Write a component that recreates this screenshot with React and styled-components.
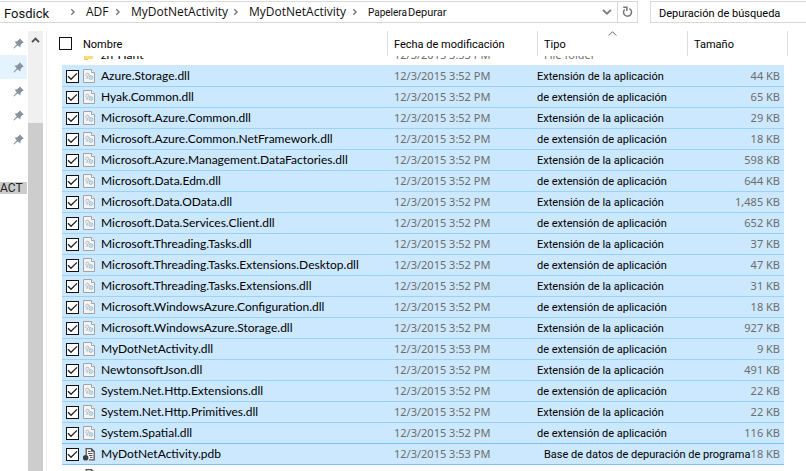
import React from "react";
import styled, { createGlobalStyle, css } from "styled-components";

const GlobalStyle = createGlobalStyle`
  *, *::before, *::after { box-sizing: border-box; }
  body {
    margin: 0;
    background: #fff;
    color: #000;
    font: 12px/20px "Open Sans", "Noto Sans", sans-serif;
  }
`;

const LATIN = `"Roboto", "Liberation Sans", sans-serif`;
const NAMES = `"Lato", "Open Sans", sans-serif`;
const FIGURES = `"Noto Sans", "Open Sans", sans-serif`;

const Explorer = styled.div`
  display: flex;
  flex-direction: column;
  height: 100vh;
  overflow: hidden;
`;

const TopBar = styled.header`
  display: flex;
  gap: 12px;
  height: 23px;
  margin-top: 1px;
  flex: none;
`;

const AddressBar = styled.nav`
  flex: 1;
  display: flex;
  min-width: 0;
  height: 22px;
  border: 1px solid #d9d9d9;
  border-left: 0;
`;

const Crumbs = styled.ol`
  flex: 1;
  display: flex;
  align-items: center;
  min-width: 0;
  margin: 0;
  padding: 0 0 0 4px;
  list-style: none;
  white-space: nowrap;
`;

const Crumb = styled.li`
  display: flex;
  align-items: center;
  flex: none;
  width: ${(p) => p.$width}px;
`;

const CrumbLink = styled.a`
  flex: 1;
  color: #111;
  text-decoration: none;
  line-height: 20px;
  ${(p) => p.$kind === "root" && css`font: 13px/20px ${LATIN}; padding-top: 4px;`}
  ${(p) => p.$kind === "small" && css`font: 10px/20px ${LATIN}; padding-top: 2px;`}
  ${(p) => p.$kind === "current" && css`font: 11px/20px ${LATIN}; padding-top: 2px;`}
`;

const ArrowSlot = styled.span`
  display: flex;
  width: 16px;
  flex: none;
`;

const BarButton = styled.button`
  display: flex;
  align-items: center;
  justify-content: center;
  width: 20px;
  padding: 0;
  border: 0;
  border-left: ${(p) => (p.$divided ? "1px solid #d9d9d9" : "0")};
  background: none;
`;

const Search = styled.input`
  width: 156px;
  height: 22px;
  padding: 2px 8px 0;
  border: 1px solid #d9d9d9;
  border-right: 0;
  border-radius: 0;
  color: #000;
  font: 11px/18px ${LATIN};
  &::placeholder { color: #000; opacity: 1; }
`;

const Body = styled.div`
  flex: 1;
  display: flex;
  min-height: 0;
  margin-top: 7px;
`;

const Sidebar = styled.aside`
  width: 27px;
  margin-right: 1px;
`;

const PinRow = styled.div`
  display: flex;
  align-items: center;
  justify-content: flex-end;
  height: 24px;
  padding-right: 3px;
  background: ${(p) => (p.$hover ? "#e5f3ff" : "transparent")};
`;

const FolderTag = styled.div`
  height: 12px;
  margin-top: 31px;
  background: #ccc;
  font: 12px/12px ${LATIN};
  color: #222;
`;

const ScrollBar = styled.div`
  display: flex;
  flex-direction: column;
  width: 15px;
  background: #f0f0f0;
`;

const ScrollUp = styled.button`
  display: flex;
  justify-content: center;
  height: 92px;
  padding: 6px 0 0;
  border: 0;
  background: none;
`;

const Thumb = styled.div`
  flex: 1;
  background: #cdcdcd;
`;

const Pane = styled.main`
  flex: 1;
  min-width: 0;
  margin-left: 3px;
  border-left: 1px solid #f0f0f0;
`;

const Files = styled.table`
  width: 100%;
  table-layout: fixed;
  border-spacing: 0;
  white-space: nowrap;
`;

const Col = styled.col`
  width: ${(p) => (p.$width ? `${p.$width}px` : "auto")};
`;

const HeadCell = styled.th`
  position: relative;
  height: 25px;
  padding: ${(p) => p.$pad || "3px 0 0 7px"};
  text-align: left;
  font: 11px/22px ${LATIN};
  vertical-align: top;
`;

const Ruled = styled(HeadCell)`
  background: linear-gradient(#dedede, #dedede) ${(p) => p.$rule || 0}px 0 / 1px 100% no-repeat;
`;

const SortMark = styled.svg`
  position: absolute;
  top: 0;
  left: 71px;
`;

const Cell = styled.td`
  height: 21px;
  padding: 0;
  line-height: 20px;
`;

const FileRow = styled.tr`
  ${Cell}:not(:first-child):not(:last-child) {
    background: #cce8ff;
    border-bottom: 1px solid ${(p) => (p.$strong ? "#7abfff" : "#99d1ff")};
  }
  &:nth-child(2) ${Cell}:not(:first-child):not(:last-child) {
    border-top: 1px solid #cce8ff;
  }
`;

const CheckCell = styled(Cell)`
  padding-left: 4px;
`;

const Check = styled.input`
  appearance: none;
  display: block;
  width: 13px;
  height: 13px;
  margin: 0;
  border: 1px solid #111;
  border-radius: 0;
  background: #fff;
  &:checked {
    background: #fff
      url("data:image/svg+xml,%3Csvg xmlns='http://www.w3.org/2000/svg' viewBox='0 0 11 11'%3E%3Cpath d='M1 5.3l3 3L10 2.4' fill='none' stroke='%23222' stroke-width='1.3'/%3E%3C/svg%3E")
      center / 11px 11px;
  }
`;

const NameCell = styled(Cell)`
  font: 12px/20px ${NAMES};
  & > label, & > span {
    display: flex;
    align-items: center;
    height: 20px;
    gap: 5px;
  }
`;

const DateCell = styled(Cell)`
  padding-left: 7px;
  color: #6d6d6d;
  font: 11px/20px ${FIGURES};
`;

const TypeCell = styled(Cell)`
  padding: 2px 0 0 ${(p) => (p.$indent ? 7 : 0)}px;
  font: 11px/18px ${LATIN};
`;

const SizeCell = styled(DateCell)`
  padding: 0 4px 0 0;
  text-align: right;
`;

const SliverCell = styled.td`
  height: 9px;
  padding: 0;
`;

const Sliver = styled.div`
  display: flex;
  align-items: flex-end;
  gap: 5px;
  height: 9px;
  padding-left: ${(p) => (p.$dim ? 7 : 0)}px;
  overflow: hidden;
  font: ${(p) => (p.$dim ? `11px/20px ${FIGURES}` : `12px/20px ${NAMES}`)};
  color: ${(p) => (p.$dim ? "#6d6d6d" : "#000")};
  & > svg { align-self: flex-start; }
`;

const CrumbArrow = () => (
  <svg width="6" height="8" viewBox="0 0 6 8" aria-hidden="true">
    <path d="M1.3 1.3l2.7 2.7-2.7 2.7" fill="none" stroke="#777" strokeWidth="1.4" />
  </svg>
);

const DownArrow = () => (
  <svg width="10" height="8" viewBox="0 0 10 8" aria-hidden="true">
    <path d="M1 1.9l4 3.8 4-3.8" fill="none" stroke="#808080" strokeWidth="2" />
  </svg>
);

const RefreshIcon = () => (
  <svg width="11" height="12" viewBox="0 0 11 12" aria-hidden="true">
    <path d="M7.4 2.6A4 4 0 1 1 2.6 3.4" fill="none" stroke="#757575" strokeWidth="1.5" />
    <path d="M1.2 1.2H4.9V5" fill="none" stroke="#757575" strokeWidth="1.5" />
  </svg>
);

const PinIcon = () => (
  <svg width="11" height="11" viewBox="0 0 11 11" aria-hidden="true">
    <path d="M6.6.2L10.8 4.4 9.4 4.9 7.7 6.8 7.2 9.6 4.8 7.2 1 10.6.4 10.1 3.8 6.2 1.4 3.8 4.2 3.3 6.1 1.6Z" fill="#85949f" />
  </svg>
);

const UpArrow = () => (
  <svg width="9" height="7" viewBox="0 0 9 7" aria-hidden="true">
    <path d="M1 5.2l3.5-3.5L8 5.2" fill="none" stroke="#505050" strokeWidth="1.9" />
  </svg>
);

const DllIcon = () => (
  <svg width="13" height="15" viewBox="0 0 13 15" aria-hidden="true">
    <path d="M.5.5H8.5L11.5 3.5V13.5H.5Z" fill="#f3f4f5" stroke="#a0a4a7" />
    <path d="M8.5.5V3.5H11.5" fill="#fff" stroke="#a0a4a7" />
    <circle cx="4.4" cy="5.8" r="1.7" fill="#e6eaec" stroke="#9fadb5" strokeDasharray="1.2 .6" />
    <circle cx="7.9" cy="8.6" r="1.9" fill="#c5e2f2" stroke="#86adc4" strokeDasharray="1.3 .5" />
    <circle cx="4" cy="8.9" r=".8" fill="#a9b7bf" />
  </svg>
);

const PdbIcon = () => (
  <svg width="13" height="15" viewBox="0 0 13 15" aria-hidden="true">
    <path d="M3.2 8V1.6H8.4L11.2 4.4V12.8H6" fill="#f6f6f6" stroke="#555" strokeWidth="1.3" />
    <path d="M8 1V4.8H11.8Z" fill="#555" />
    <path d="M5 4.5H7.5M5 6.5H9.5M6 8.5H9.5M7 10.5H9.5" stroke="#555" />
    <circle cx="2.6" cy="10.8" r="2.8" fill="#3c3c3c" />
  </svg>
);

const FolderIcon = () => (
  <svg width="13" height="5" viewBox="0 0 13 5" aria-hidden="true">
    <path d="M1 0H10V3H1Z" fill="#ffdc7a" />
    <path d="M1 3H5V4H1Z" fill="#f3c95b" />
  </svg>
);

const APP = "Extensión de la aplicación";
const EXT = "de extensión de aplicación";

const files = [
  ["Azure.Storage.dll", "3:52", "44"],
  ["Hyak.Common.dll", "3:52", "65"],
  ["Microsoft.Azure.Common.dll", "3:52", "29"],
  ["Microsoft.Azure.Common.NetFramework.dll", "3:52", "18"],
  ["Microsoft.Azure.Management.DataFactories.dll", "3:52", "598"],
  ["Microsoft.Data.Edm.dll", "3:52", "644"],
  ["Microsoft.Data.OData.dll", "3:52", "1,485"],
  ["Microsoft.Data.Services.Client.dll", "3:52", "652"],
  ["Microsoft.Threading.Tasks.dll", "3:52", "37"],
  ["Microsoft.Threading.Tasks.Extensions.Desktop.dll", "3:52", "47"],
  ["Microsoft.Threading.Tasks.Extensions.dll", "3:52", "31"],
  ["Microsoft.WindowsAzure.Configuration.dll", "3:52", "18"],
  ["Microsoft.WindowsAzure.Storage.dll", "3:52", "927"],
  ["MyDotNetActivity.dll", "3:53", "9"],
  ["NewtonsoftJson.dll", "3:52", "491"],
  ["System.Net.Http.Extensions.dll", "3:52", "22"],
  ["System.Net.Http.Primitives.dll", "3:52", "22"],
  ["System.Spatial.dll", "3:52", "116"],
  ["MyDotNetActivity.pdb", "3:53", "18"],
].map(([name, time, size], i) => ({
  name,
  date: `12/3/2015 ${time} PM`,
  type: name.endsWith(".pdb")
    ? "Base de datos de depuración de programa"
    : i % 2 ? EXT : APP,
  size: `${size} KB`,
}));

const crumbs = [
  { label: "Fosdick", width: 82, kind: "root", arrow: true },
  { label: "ADF", width: 45, arrow: true },
  { label: "MyDotNetActivity", width: 118, arrow: true },
  { label: "MyDotNetActivity", width: 119, arrow: true },
  { label: "Papelera", width: 40, kind: "small" },
  { label: "Depurar", width: 60, kind: "current" },
];

export default function App() {
  const last = files.length - 1;
  return (
    <>
      <GlobalStyle />
      <Explorer>
        <TopBar>
          <AddressBar aria-label="Ruta">
            <Crumbs>
              {crumbs.map((c, i) => (
                <Crumb key={i} $width={c.width}>
                  <CrumbLink href="#" $kind={c.kind}>{c.label}</CrumbLink>
                  {c.arrow && <ArrowSlot><CrumbArrow /></ArrowSlot>}
                </Crumb>
              ))}
            </Crumbs>
            <BarButton type="button" aria-label="Ubicaciones anteriores"><DownArrow /></BarButton>
            <BarButton type="button" $divided aria-label="Actualizar"><RefreshIcon /></BarButton>
          </AddressBar>
          <Search type="text" aria-label="Depuración de búsqueda" placeholder="Depuración de búsqueda" />
        </TopBar>
        <Body>
          <Sidebar>
            {[0, 1, 2, 3, 4].map((i) => (
              <PinRow key={i} $hover={i === 1}><PinIcon /></PinRow>
            ))}
            <FolderTag>ACT</FolderTag>
          </Sidebar>
          <ScrollBar>
            <ScrollUp type="button" aria-label="Desplazar hacia arriba"><UpArrow /></ScrollUp>
            <Thumb />
          </ScrollBar>
          <Pane>
            <Files>
              <colgroup>
                <Col $width={15} />
                <Col $width={21} />
                <Col />
                <Col $width={150} />
                <Col $width={150} />
                <Col $width={97} />
                <Col $width={22} />
              </colgroup>
              <thead>
                <tr>
                  <HeadCell colSpan={2} $pad="6px 0 0 12px">
                    <Check type="checkbox" aria-label="Seleccionar todo" />
                  </HeadCell>
                  <HeadCell $pad="3px 0 0 0" scope="col">Nombre</HeadCell>
                  <Ruled scope="col">Fecha de modificación</Ruled>
                  <Ruled scope="col">
                    Tipo
                    <SortMark width="9" height="5" viewBox="0 0 9 5" aria-hidden="true">
                      <path d="M.7 4.5l3.8-3.8 3.8 3.8" fill="none" stroke="#666" />
                    </SortMark>
                  </Ruled>
                  <Ruled scope="col">Tamaño</Ruled>
                  <Ruled as="td" $rule={3} />
                </tr>
              </thead>
              <tbody>
                <tr>
                  <SliverCell colSpan={2} />
                  <SliverCell><Sliver><FolderIcon />zh-Hant</Sliver></SliverCell>
                  <SliverCell><Sliver $dim>12/3/2015 3:53 PM</Sliver></SliverCell>
                  <SliverCell><Sliver $dim>File folder</Sliver></SliverCell>
                  <SliverCell colSpan={2} />
                </tr>
                {files.map((f, i) => (
                  <FileRow key={f.name} $strong={i >= last - 1}>
                    <Cell />
                    <CheckCell><Check id={`file-${i}`} type="checkbox" defaultChecked /></CheckCell>
                    <NameCell>
                      <label htmlFor={`file-${i}`}>
                        {i === last ? <PdbIcon /> : <DllIcon />}
                        {f.name}
                      </label>
                    </NameCell>
                    <DateCell>{f.date}</DateCell>
                    <TypeCell $indent={i === last}>{f.type}</TypeCell>
                    <SizeCell>{f.size}</SizeCell>
                    <Cell />
                  </FileRow>
                ))}
                <tr>
                  <Cell colSpan={2} />
                  <NameCell><span><PdbIcon />MyDotNetActivity.dll.config</span></NameCell>
                  <DateCell>12/3/2015 3:53 PM</DateCell>
                  <DateCell>XML Configuration File</DateCell>
                  <SizeCell>9 KB</SizeCell>
                  <Cell />
                </tr>
              </tbody>
            </Files>
          </Pane>
        </Body>
      </Explorer>
    </>
  );
}
